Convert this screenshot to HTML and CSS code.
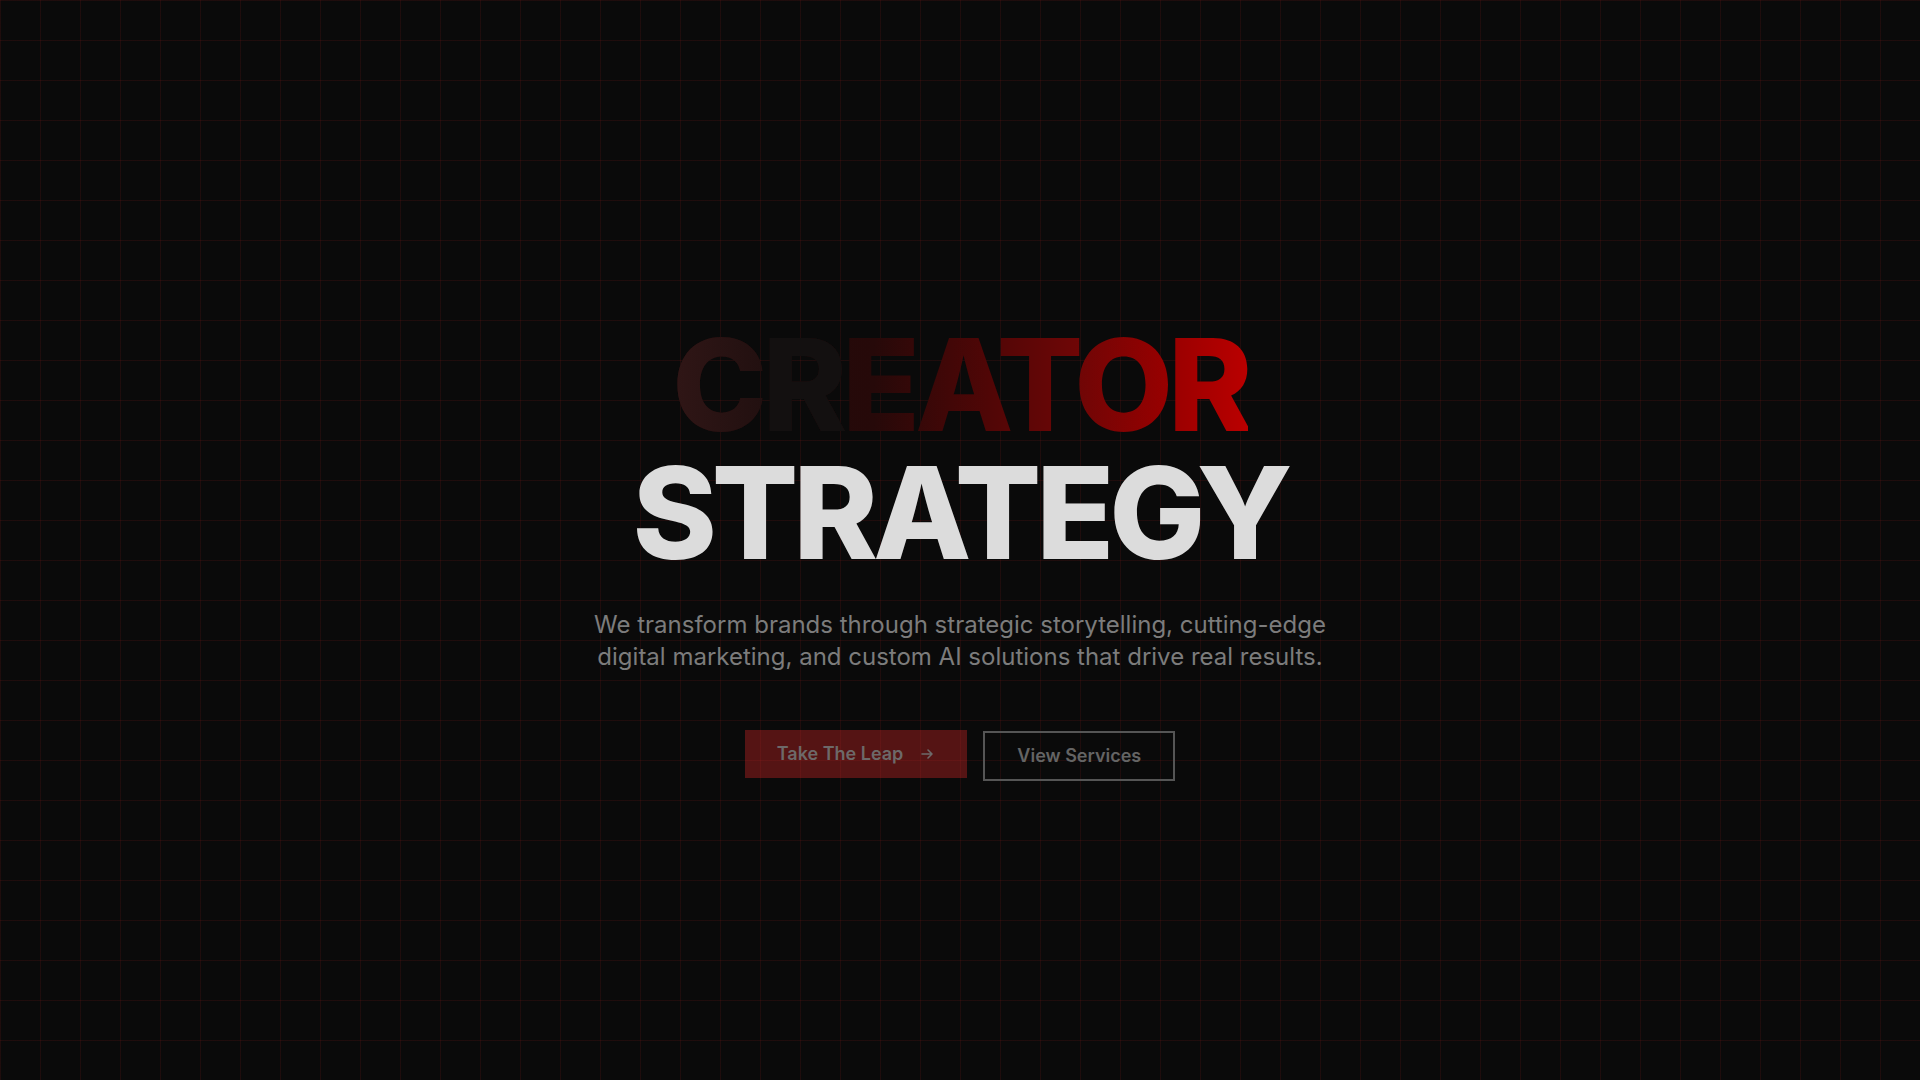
FILE: index.html
```html
<!DOCTYPE html>
<html lang="en">
<head>
<meta charset="utf-8">
<title>Creator Strategy</title>
<link rel="stylesheet" href="styles.css">
</head>
<body>
<main class="hero">
  <h1 class="title">
    <span class="line line-creator"><span class="ltr-c">C</span><span class="ltr-r">R</span>EATOR</span>
    <span class="line line-strategy">STRATEGY</span>
  </h1>
  <p class="lead">We transform brands through strategic storytelling, cutting-edge digital marketing, and custom AI solutions that drive real results.</p>
  <div class="actions">
    <a class="btn btn-primary" href="#">Take The Leap
      <svg class="arrow" width="16" height="16" viewBox="0 0 16 16" fill="none" stroke="currentColor" stroke-width="1.6" stroke-linecap="round" stroke-linejoin="round"><path d="M3 8h10M9 4l4 4-4 4"/></svg>
    </a>
    <a class="btn btn-outline" href="#">View Services</a>
  </div>
</main>
</body>
</html>
```
FILE: styles.css
```css
* { box-sizing: border-box; }
html, body { margin: 0; padding: 0; }
body {
  background-color: #0a0a0a;
  background-image:
    linear-gradient(to right, rgba(220, 38, 38, 0.1) 1px, transparent 1px),
    linear-gradient(to bottom, rgba(220, 38, 38, 0.1) 1px, transparent 1px);
  background-size: 40px 40px;
  font-family: Inter, "Noto Sans", sans-serif;
  min-height: 100vh;
}
.hero {
  min-height: 100vh;
  display: flex;
  flex-direction: column;
  align-items: center;
  justify-content: center;
  padding-top: 22px;
  text-align: center;
}
.title {
  margin: 0 0 32px;
  font-weight: 800;
  font-size: 128px;
  line-height: 128px;
  letter-spacing: -0.04em;
}
.line { display: block; }
.line-creator {
  background-image: linear-gradient(to right, rgb(34, 12, 12) 0%, rgb(38, 9, 9) 35%, rgb(80, 6, 6) 55%, rgb(110, 6, 6) 70%, rgb(152, 0, 0) 86%, rgb(186, 0, 0) 100%);
  -webkit-background-clip: text;
  background-clip: text;
  -webkit-text-fill-color: transparent;
  color: transparent;
  display: inline-block;
}
.ltr-c {
  background-image: linear-gradient(to right, rgb(48, 22, 22), rgb(34, 16, 16));
  -webkit-background-clip: text;
  background-clip: text;
  -webkit-text-fill-color: transparent;
}
.ltr-r { -webkit-text-fill-color: rgb(19, 16, 16); }
.line-strategy { color: #dcdcdc; }
.lead {
  margin: 0 0 57px;
  max-width: 768px;
  font-size: 24px;
  line-height: 32px;
  color: #7c7c7c;
}
.actions {
  display: flex;
  align-items: flex-start;
  gap: 16px;
}
.btn {
  font-size: 18px;
  font-weight: 600;
  text-decoration: none;
  display: inline-flex;
  align-items: center;
}
.btn-primary {
  background: rgba(220, 38, 38, 0.36);
  color: #6d6969;
  padding: 14px 32px;
  line-height: 20px;
  gap: 16px;
}
.btn-primary .arrow { display: block; }
.btn-outline {
  margin-top: 1px;
  border: 2px solid #555555;
  color: #646464;
  padding: 12px 32px;
  line-height: 22px;
}
```
